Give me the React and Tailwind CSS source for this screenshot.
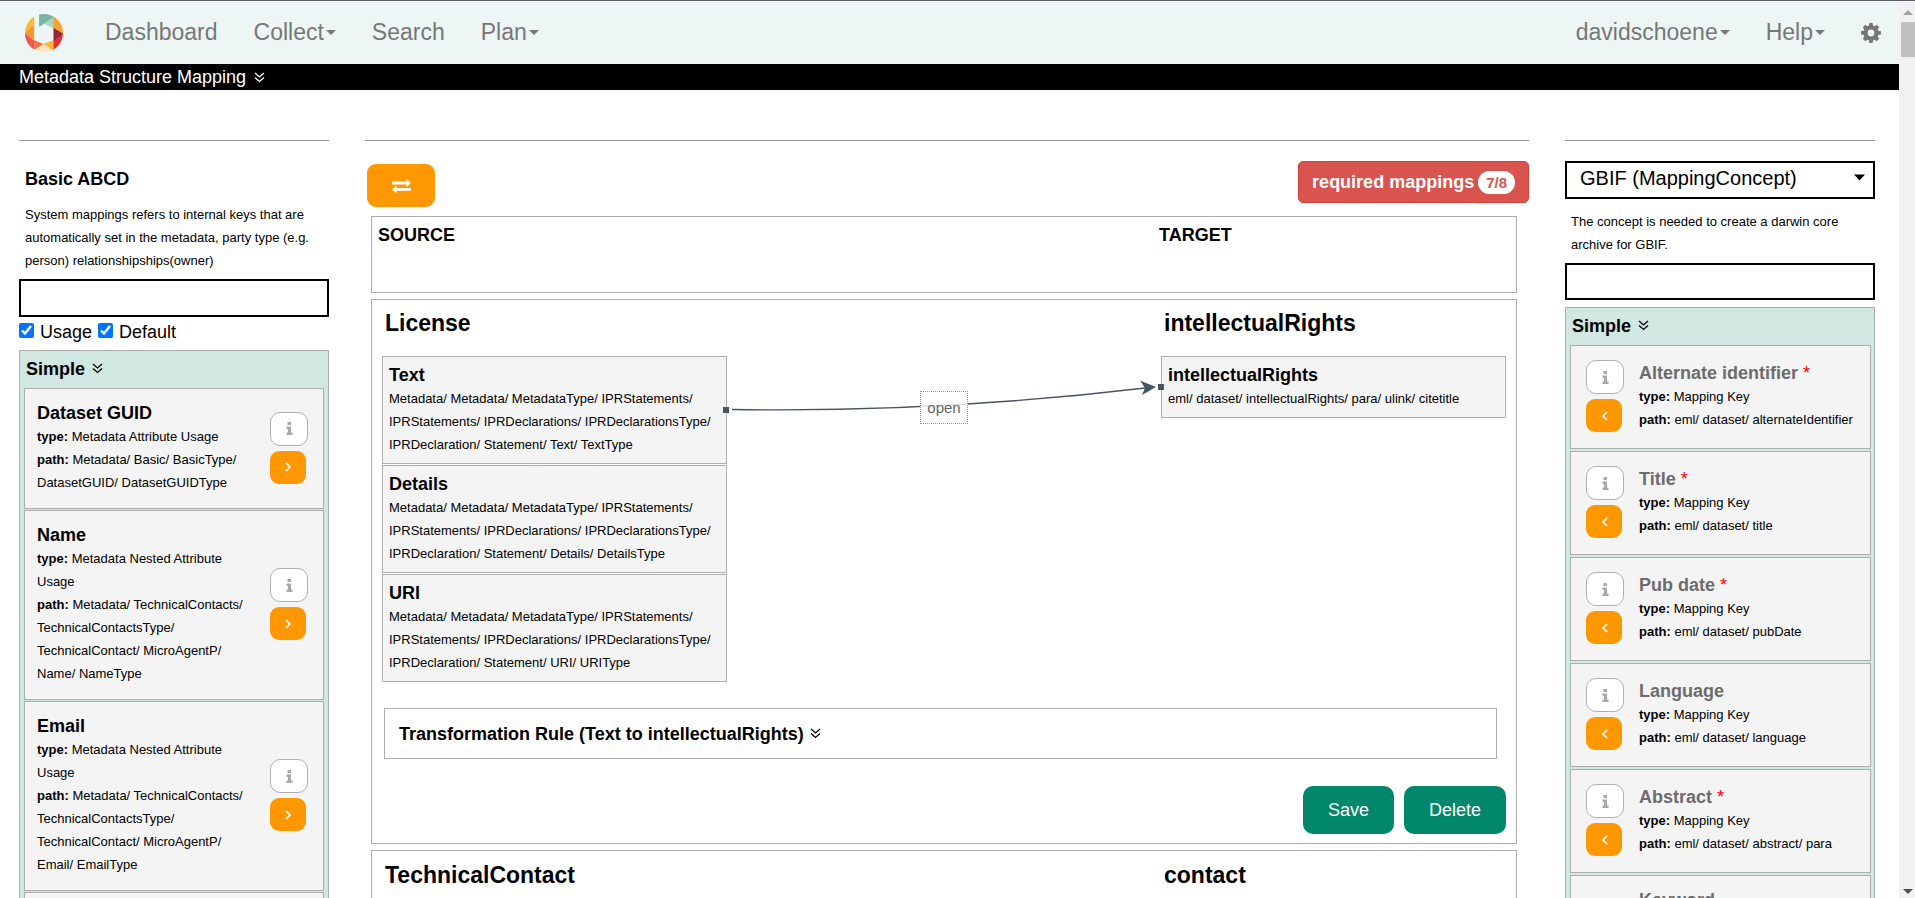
import React from "react";

const SOURCE_PATH = "Metadata/ Metadata/ MetadataType/ IPRStatements/ IPRStatements/ IPRDeclarations/ IPRDeclarationsType/ IPRDeclaration/ Statement/ ";

const sourceItems = [
  { name: "Text", path: SOURCE_PATH + "Text/ TextType" },
  { name: "Details", path: SOURCE_PATH + "Details/ DetailsType" },
  { name: "URI", path: SOURCE_PATH + "URI/ URIType" },
];

const leftItems = [
  { name: "Dataset GUID", type: "Metadata Attribute Usage", path: "Metadata/ Basic/ BasicType/ DatasetGUID/ DatasetGUIDType" },
  { name: "Name", type: "Metadata Nested Attribute Usage", path: "Metadata/ TechnicalContacts/ TechnicalContactsType/ TechnicalContact/ MicroAgentP/ Name/ NameType" },
  { name: "Email", type: "Metadata Nested Attribute Usage", path: "Metadata/ TechnicalContacts/ TechnicalContactsType/ TechnicalContact/ MicroAgentP/ Email/ EmailType" },
  { name: "Phone", type: "Metadata Nested Attribute Usage", path: "Metadata/ TechnicalContacts/ TechnicalContactsType/ TechnicalContact/ MicroAgentP/ Phone/ PhoneType" },
];

const rightItems = [
  { name: "Alternate identifier", required: true, path: "eml/ dataset/ alternateIdentifier" },
  { name: "Title", required: true, path: "eml/ dataset/ title" },
  { name: "Pub date", required: true, path: "eml/ dataset/ pubDate" },
  { name: "Language", required: false, path: "eml/ dataset/ language" },
  { name: "Abstract", required: true, path: "eml/ dataset/ abstract/ para" },
  { name: "Keyword", required: false, path: "eml/ dataset/ keywordSet/ keyword" },
];

function Logo() {
  return (
    <svg className="size-[38px]" viewBox="30 22 116 116" aria-hidden="true">
      <clipPath id="ring"><circle cx="88" cy="80" r="58" /></clipPath>
      <g clipPath="url(#ring)">
        <path d="M73 20H118V33L73 62Z" fill="#79b3a3" />
        <path d="M118 32V66L86 50Z" fill="#a3d6bd" />
        <path d="M58 20V56L28 81V20Z" fill="#f9bd34" />
        <path d="M58 55V104L29 80Z" fill="#f39a2c" />
        <path d="M29 80L58 104L36 112Z" fill="#ee5f55" />
        <path d="M58 103V140H28V108Z" fill="#e9524f" />
        <path d="M29 82L58 104V134H28Z" fill="#ea5650" />
        <path d="M58 102L89 114L58 134Z" fill="#f07040" />
        <path d="M88 112L118 133V140H56V133Z" fill="#fde3bd" />
        <path d="M117 102V134L87 113Z" fill="#f8b833" />
        <path d="M147 79V140H117V103Z" fill="#e62e35" />
        <path d="M117 63L147 81L117 105Z" fill="#8f2536" />
        <path d="M117 20H147V82L117 64Z" fill="#f7a12f" />
      </g>
    </svg>
  );
}

function Caret() {
  return (
    <svg className="ml-0.5 h-[5px] w-2.5" viewBox="0 0 10 5" fill="currentColor" aria-hidden="true">
      <path d="M0 0H10L5 5Z" />
    </svg>
  );
}

function Gear() {
  return (
    <svg className="size-[20px]" viewBox="0 0 20 20" fill="currentColor" fillRule="evenodd" aria-hidden="true">
      <path d="M8.4 0h3.2l.5 2.6 1.4.6 2.2-1.5 2.5 2.5-1.5 2.2.6 1.4 2.7.5v3.3l-2.7.5-.6 1.4 1.5 2.2-2.5 2.5-2.2-1.5-1.4.6-.5 2.7H8.4l-.5-2.7-1.4-.6-2.2 1.5-2.5-2.5 1.5-2.2-.6-1.4L0 11.6V8.3l2.7-.5.6-1.4-1.5-2.2 2.5-2.5 2.2 1.5 1.4-.6ZM10 6.6a3.4 3.4 0 1 0 0 6.8 3.4 3.4 0 0 0 0-6.8Z" />
    </svg>
  );
}

function DoubleDown() {
  return (
    <svg className="size-[11px]" viewBox="0 0 11 11" fill="none" stroke="currentColor" strokeWidth="1.3" aria-hidden="true">
      <path d="M1 1L5.5 5L10 1M1 5.5L5.5 9.5L10 5.5" />
    </svg>
  );
}

function InfoIcon() {
  return (
    <svg className="h-[13px] w-[7px]" viewBox="0 0 7 13" fill="currentColor" aria-hidden="true">
      <path d="M1.5 0H5V3H1.5ZM0.5 4.5H5V10.5H6.5V13H0.5V10.5H2V7H0.5Z" />
    </svg>
  );
}

function Exchange() {
  return (
    <svg className="h-3.5 w-[19px]" viewBox="0 0 19 14" fill="currentColor" aria-hidden="true">
      <path d="M0 2.6H14.6V0L19 4L14.6 8V5.4H0ZM19 11.8H4.4V14L0 10.4L4.4 6.6V9H19Z" />
    </svg>
  );
}

function NavItem({ children, caret }) {
  return (
    <a href="#" className="flex items-center">
      {children}
      {caret && <Caret />}
    </a>
  );
}

function ItemButtons({ name, direction }) {
  return (
    <div className="flex w-[38px] shrink-0 flex-col items-start gap-[5px]">
      <button aria-label={"Information about " + name} className="flex h-[34px] w-[38px] items-center justify-center rounded-[10px] border border-[#b0b0b0] bg-white text-[#a9a9a9]">
        <InfoIcon />
      </button>
      <button aria-label={"Add " + name} className="flex h-[33px] w-9 items-center justify-center rounded-[9px] bg-[#ff9800] text-white">
        <svg className="h-2.5 w-[7px]" viewBox="0 0 7 10" fill="none" stroke="currentColor" strokeWidth="1.7" aria-hidden="true">
          <path d={direction === "right" ? "M1 1L5 5L1 9" : "M6 1L2 5L6 9"} />
        </svg>
      </button>
    </div>
  );
}

function Details({ type, path }) {
  return (
    <div className="text-[13px] leading-[23px]">
      <p><b>type:</b> {type}</p>
      <p><b>path:</b> {path}</p>
    </div>
  );
}

function SimpleHeading() {
  return (
    <h3 className="flex h-[37px] items-start gap-[7px] px-0.5 pt-1.5 text-lg leading-6 font-bold">
      Simple <span className="flex h-[22px] items-center"><DoubleDown /></span>
    </h3>
  );
}

function MappedItem({ name, path }) {
  return (
    <div className="border border-[#aeaeae] bg-[#f4f4f4] px-1.5 pt-1.5 pb-[7px]">
      <h4 className="text-lg leading-6 font-bold">{name}</h4>
      <p className="text-[13px] leading-[23px]">{path}</p>
    </div>
  );
}

function Connection() {
  return (
    <div className="relative h-[62px] min-w-0 flex-1">
      <svg className="absolute inset-0 h-full w-full overflow-visible" viewBox="0 0 434 62" preserveAspectRatio="none" aria-hidden="true">
        <path d="M5 53.5Q208 57 423 31.5" fill="none" stroke="#445566" strokeWidth="1.3" />
        <path d="M429 31L413 24.5L418 32L415 39Z" fill="#445566" />
        <path d="M-4 51H2V57H-4ZM431 28H437V34H431Z" fill="#445566" />
      </svg>
      <div className="absolute inset-x-0 top-[35px] flex justify-center">
        <span className="border border-dotted border-[#999] bg-white/80 px-1.5 pt-[5px] pb-1 text-[15px] leading-[22px] text-[#666]">open</span>
      </div>
    </div>
  );
}

function MappingHeading({ source, target }) {
  return (
    <div className="flex justify-between px-[3px] text-[23px] leading-8 font-bold">
      <h2>{source}</h2>
      <h2 className="w-[339px]">{target}</h2>
    </div>
  );
}

export default function App() {
  return (
    <div className="flex h-screen overflow-hidden border-t border-[#5f5f66] bg-white font-['Liberation_Sans',Arial,sans-serif] text-black">
      <div className="min-w-0 flex-1">
        <header className="flex h-[63px] items-center justify-between bg-[#edf6f5] pr-[18px] pl-[25px] text-[23px] text-[#777]">
          <nav aria-label="Main" className="flex items-center gap-9">
            <a href="#" aria-label="Home" className="mr-1.5"><Logo /></a>
            <NavItem>Dashboard</NavItem>
            <NavItem caret>Collect</NavItem>
            <NavItem>Search</NavItem>
            <NavItem caret>Plan</NavItem>
          </nav>
          <nav aria-label="Account" className="flex items-center gap-9">
            <NavItem caret>davidschoene</NavItem>
            <NavItem caret>Help</NavItem>
            <a href="#" aria-label="Settings"><Gear /></a>
          </nav>
        </header>
        <h1 className="flex h-[26px] items-center gap-2 bg-black px-[19px] text-lg leading-6 text-white">
          Metadata Structure Mapping <DoubleDown />
        </h1>

        <main className="grid grid-cols-[310px_minmax(0,1fr)_310px] gap-9 pt-[50px] pr-6 pl-[19px]">
          <section className="border-t border-[#999] pt-[26px]">
            <h2 className="px-1.5 text-lg leading-6 font-bold">Basic ABCD</h2>
            <p className="mt-3 px-1.5 text-[13px] leading-[23px]">
              System mappings refers to internal keys that are automatically set in the metadata, party type (e.g. person) relationshipships(owner)
            </p>
            <input type="text" aria-label="Filter source attributes" className="mt-[7px] block h-[38px] w-full border-2 border-black px-3" />
            <div className="mt-[3px] mb-1.5 flex gap-1.5 text-lg leading-6">
              <label className="flex items-center gap-1.5"><input type="checkbox" defaultChecked className="mb-1 size-[15px] accent-[#0075ff]" />Usage</label>
              <label className="flex items-center gap-1.5"><input type="checkbox" defaultChecked className="mb-1 size-[15px] accent-[#0075ff]" />Default</label>
            </div>
            <div className="border border-[#aeaeae] bg-[#d1e7e1] px-1 pb-1">
              <SimpleHeading />
              <div className="flex flex-col gap-px">
                {leftItems.map((item) => (
                  <article key={item.name} className="flex items-center justify-between border border-[#aeaeae] bg-[#f4f4f4] pt-3 pr-[15px] pb-3.5 pl-3">
                    <div className="w-[218px]">
                      <h4 className="text-lg leading-6 font-bold">{item.name}</h4>
                      <Details type={item.type} path={item.path} />
                    </div>
                    <ItemButtons name={item.name} direction="right" />
                  </article>
                ))}
              </div>
            </div>
          </section>

          <section className="border-t border-[#999] pt-5">
            <div className="flex h-[46px] items-start justify-between">
              <button aria-label="Switch source and target" className="ml-0.5 flex h-[43px] w-[68px] items-center justify-center self-end rounded-[9px] bg-[#ff9800] text-white">
                <Exchange />
              </button>
              <button className="flex h-[42px] items-center gap-1 rounded-[5px] border border-[#d43f3a] bg-[#d9534f] px-[13px] text-lg font-bold text-white">
                required mappings
                <span className="rounded-full bg-white px-2 text-[15px] leading-[23px] text-[#d9534f]">7/8</span>
              </button>
            </div>
            <div className="mt-[9px] mr-3 ml-1.5 flex flex-col gap-1.5">
              <div className="flex h-[77px] justify-between border border-[#aeaeae] px-1.5 pt-1.5 text-lg leading-6 font-bold">
                <h2>SOURCE</h2>
                <h2 className="w-[351px]">TARGET</h2>
              </div>
              <article className="border border-[#aeaeae] px-2.5 pt-[7px] pb-[9px]">
                <MappingHeading source="License" target="intellectualRights" />
                <div className="mt-[17px] flex items-start">
                  <div className="flex w-[345px] flex-col gap-px">
                    {sourceItems.map((item) => <MappedItem key={item.name} {...item} />)}
                  </div>
                  <Connection />
                  <div className="w-[345px]">
                    <MappedItem name="intellectualRights" path="eml/ dataset/ intellectualRights/ para/ ulink/ citetitle" />
                  </div>
                </div>
                <h3 className="mt-[26px] mr-[9px] ml-0.5 flex h-[51px] items-center gap-1.5 border border-[#aeaeae] px-3.5 text-lg font-bold">
                  Transformation Rule (Text to intellectualRights) <DoubleDown />
                </h3>
                <div className="mt-[27px] flex justify-end gap-2.5 text-lg text-white">
                  <button className="h-12 rounded-[10px] bg-[#00876c] px-[25px]">Save</button>
                  <button className="h-12 rounded-[10px] bg-[#00876c] px-[25px]">Delete</button>
                </div>
              </article>
              <article className="h-60 border border-[#aeaeae] px-2.5 pt-2">
                <MappingHeading source="TechnicalContact" target="contact" />
              </article>
            </div>
          </section>

          <section className="border-t border-[#999] pt-5">
            <div className="relative">
              <select aria-label="Mapping concept" className="block h-[38px] w-full appearance-none border-2 border-black bg-white pr-8 pb-1 pl-[13px] text-xl leading-6">
                <option>GBIF (MappingConcept)</option>
              </select>
              <svg className="pointer-events-none absolute top-[13px] right-2.5 h-[7px] w-[11px]" viewBox="0 0 11 7" aria-hidden="true">
                <path d="M0 0.5H11L5.5 6.5Z" />
              </svg>
            </div>
            <p className="mt-[11px] px-1.5 text-[13px] leading-[23px]">The concept is needed to create a darwin core archive for GBIF.</p>
            <input type="text" aria-label="Filter target keys" className="my-[7px] block h-[37px] w-full border-2 border-black px-3" />
            <div className="border border-[#aeaeae] bg-[#d1e7e1] pr-[3px] pb-1 pl-1">
              <SimpleHeading />
              <div className="flex flex-col gap-0.5">
                {rightItems.map((item) => (
                  <article key={item.name} className="flex min-h-[104px] items-center gap-[15px] border border-[#aeaeae] bg-[#f4f4f4] px-[15px] pt-3 pb-3.5">
                    <ItemButtons name={item.name} direction="left" />
                    <div>
                      <h4 className="text-lg leading-6 font-bold text-[#6c6c6c]">
                        {item.name} {item.required && <span className="font-normal text-[#f00]">*</span>}
                      </h4>
                      <Details type="Mapping Key" path={item.path} />
                    </div>
                  </article>
                ))}
              </div>
            </div>
          </section>
        </main>
      </div>

      <div className="flex w-4 shrink-0 flex-col items-end justify-between bg-[#f1f1f1] pt-[9px] pb-1" aria-hidden="true">
        <div className="flex w-3.5 flex-col items-center gap-[7px]">
          <svg className="h-[5px] w-2.5" viewBox="0 0 10 5"><path d="M0 5H10L5 0Z" fill="#a3a3a3" /></svg>
          <div className="h-[35px] w-full bg-[#c1c1c1]" />
        </div>
        <div className="flex w-3.5 justify-center">
          <svg className="h-[5px] w-2.5" viewBox="0 0 10 5"><path d="M0 0H10L5 5Z" fill="#505050" /></svg>
        </div>
      </div>
    </div>
  );
}
